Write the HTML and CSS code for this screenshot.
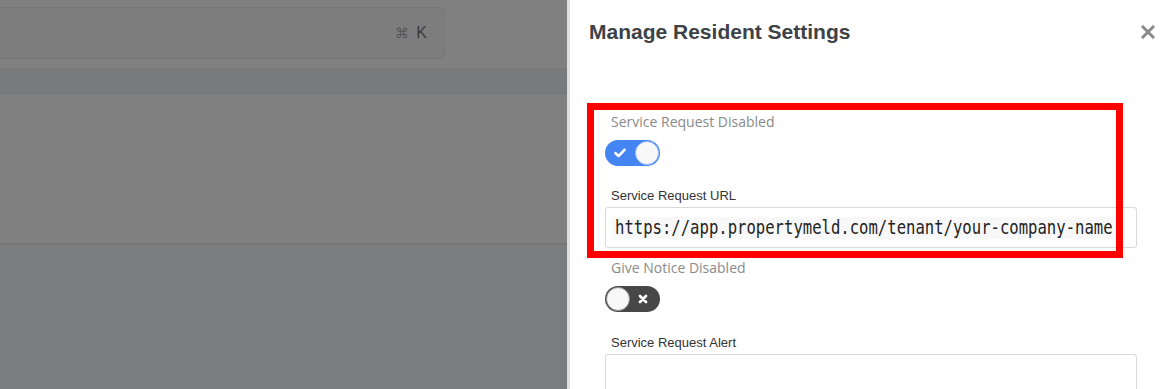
FILE: index.html
```html
<!DOCTYPE html>
<html lang="en">
<head>
  <meta charset="UTF-8">
  <meta name="viewport" content="width=device-width, initial-scale=1.0">
  <title>Manage Resident Settings</title>
  <link rel="stylesheet" href="styles.css">
</head>
<body>

  <div class="backdrop">
    <div class="topbar">
      <div class="search"><span class="kbd"><span class="cmd">⌘</span> K</span></div>
    </div>
    <div class="band"></div>
    <div class="rows"></div>
    <div class="lower"></div>
  </div>

  <aside class="drawer">
    <header class="drawer-head">
      <h2>Manage Resident Settings</h2>
      <button class="close" aria-label="Close">
        <svg width="14" height="14" viewBox="0 0 14 14"><path d="M2 2L12 12M12 2L2 12" stroke="#8a8a8a" stroke-width="3" stroke-linecap="square"/></svg>
      </button>
    </header>

    <form class="settings">
      <label class="lbl-muted">Service Request Disabled</label>
      <span class="switch on">
        <svg class="mark" width="12" height="10" viewBox="0 0 12 10"><path d="M1.5 5.2L4.6 8L10.5 1.8" fill="none" stroke="#fff" stroke-width="2.6" stroke-linecap="round" stroke-linejoin="round"/></svg>
        <span class="knob"></span>
      </span>

      <label class="lbl">Service Request URL</label>
      <div class="field"><code><span class="url">https://app.propertymeld.com/tenant/your-company-name</span></code></div>

      <label class="lbl-muted">Give Notice Disabled</label>
      <span class="switch off">
        <span class="knob"></span>
        <svg class="mark" width="10" height="10" viewBox="0 0 10 10"><path d="M2 2L8 8M8 2L2 8" stroke="#fff" stroke-width="2.8" stroke-linecap="round"/></svg>
      </span>

      <label class="lbl">Service Request Alert</label>
      <div class="field area"></div>
    </form>

    <!-- annotation box drawn over the screenshot -->
    <div class="highlight"></div>
  </aside>

</body>
</html>
```

FILE: styles.css
```css
body{
  margin:0;height:100vh;overflow:hidden;display:flex;
  font-family:"Liberation Sans",Arial,sans-serif;background:#fff;
}

/* dimmed page behind the drawer */
.backdrop{flex:1;display:flex;flex-direction:column;background:#808080}
.topbar{height:68px;padding-top:7px;box-sizing:border-box}
.search{
  height:52px;margin:0 122px 0 -10px;box-sizing:border-box;
  background:#7d7d7e;border:1px solid #777879;border-radius:6px;
  display:flex;align-items:center;justify-content:flex-end;padding-right:17px;
}
.kbd{font-size:16px;color:#3a3a3a}
.cmd{color:#555;font-size:14px;margin-right:3px}
.band{height:27px;background:#797a7c}
.rows{height:148px;border-bottom:2px solid #767677}
.lower{flex:1;background:#7b7c7e}

/* drawer */
.drawer{
  position:relative;width:604px;flex:none;border-left:3px solid #dedede;
  padding:20px 16px 0 19px;box-sizing:border-box;overflow:hidden;
}
.drawer-head{display:flex;justify-content:space-between;align-items:center;height:24px}
.drawer-head h2{
  margin:0;font-size:21px;line-height:24px;font-weight:bold;color:#3d4247;
}
.close{border:none;background:none;padding:0;display:flex;cursor:pointer}

.settings{display:flex;flex-direction:column;align-items:flex-start;margin:70px 18px 0 16px}
.lbl-muted{
  font-family:"Open Sans",sans-serif;font-size:14px;line-height:16px;color:#8a8a8a;
  padding-left:6px;
}
.lbl{font-size:13px;line-height:15px;color:#333;padding-left:6px;margin-top:22px}
.field + .lbl-muted{margin-top:12px}
.switch.off + .lbl{margin-top:23px}

.switch{
  width:55px;height:26px;box-sizing:border-box;border-radius:13px;margin-top:10px;
  display:flex;align-items:center;justify-content:space-between;padding:0 1px;
}
.switch.on{background:#4584f3;padding-left:9px}
.switch.off{background:#474747;padding-right:12px}
.knob{
  width:24px;height:24px;border-radius:50%;background:#f8f8f8;box-sizing:border-box;
}
.switch.on .knob{border:1px solid #9dbdf6}
.switch.off .knob{border:1px solid #8e8e8e}

.field{
  align-self:stretch;height:41px;margin-top:4px;box-sizing:border-box;
  border:1px solid #d6d9dd;border-radius:3px;display:flex;align-items:center;padding:0 6px;
}
.field code{
  display:inline-block;background:#f8f8f8;padding:2px 4px 2px 3px;
  font-family:"DejaVu Sans Mono",monospace;font-size:15.6px;color:#232323;
}
.url{display:inline-block;transform:scaleY(1.28)}
.field.area{height:35px;border-bottom:none;border-radius:3px 3px 0 0}

.highlight{
  position:absolute;left:17px;top:103px;width:536px;height:155px;
  border:7px solid #ff0000;box-sizing:border-box;pointer-events:none;
}
```
